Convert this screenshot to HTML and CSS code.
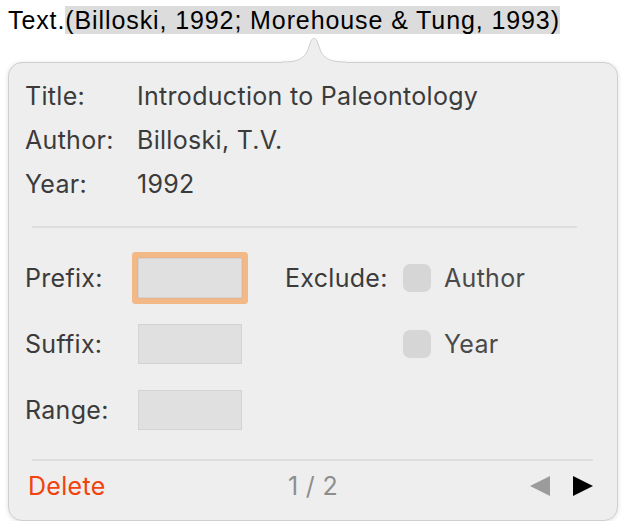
FILE: index.html
```html
<!DOCTYPE html>
<html>
<head>
    <title>Citation Popover</title>
    <link rel="stylesheet" href="styles.css">
</head>
<body>
    <div class="line">Text.<span class="cite">(Billoski, 1992; Morehouse &amp; Tung, 1993)</span></div>

    <div class="popover">
        <svg class="arrow" width="64" height="27" viewBox="0 0 64 27">
            <path d="M0 26 C14 26 20 24 25 16 L29 5 C30.5 1.5 33.5 1.5 35 5 L39 16 C44 24 50 26 64 26 L64 27 L0 27 Z" fill="#eeeeee"/>
            <path d="M0 26 C14 26 20 24 25 16 L29 5 C30.5 1.5 33.5 1.5 35 5 L39 16 C44 24 50 26 64 26" fill="none" stroke="#cfcfcf" stroke-width="1"/>
        </svg>

        <div class="meta">
            <div class="meta-row"><span class="meta-label">Title:</span><span>Introduction to Paleontology</span></div>
            <div class="meta-row"><span class="meta-label">Author:</span><span>Billoski, T.V.</span></div>
            <div class="meta-row"><span class="meta-label">Year:</span><span>1992</span></div>
        </div>

        <hr class="sep top-sep">

        <div class="form">
            <div class="form-row">
                <span class="form-label">Prefix:</span>
                <span class="field focused"></span>
                <span class="exclude-label">Exclude:</span>
                <span class="check"></span>
                <span class="check-text">Author</span>
            </div>
            <div class="form-row">
                <span class="form-label">Suffix:</span>
                <span class="field"></span>
                <span class="exclude-label"></span>
                <span class="check"></span>
                <span class="check-text">Year</span>
            </div>
            <div class="form-row">
                <span class="form-label">Range:</span>
                <span class="field"></span>
            </div>
        </div>

        <hr class="sep bottom-sep">

        <div class="footer">
            <span class="delete">Delete</span>
            <span class="pager">1 / 2</span>
            <span class="nav">
                <svg width="20" height="20" viewBox="0 0 20 20"><polygon points="20,0 20,20 0,10" fill="#9b9b9b"/></svg>
                <svg width="20" height="20" viewBox="0 0 20 20"><polygon points="0,0 0,20 20,10" fill="#000000"/></svg>
            </span>
        </div>
    </div>
</body>
</html>
```

FILE: styles.css
```css
body {
    margin: 0;
    background: #ffffff;
    font-family: "Liberation Sans", Arial, sans-serif;
}
.line {
    font-size: 25px;
    letter-spacing: 0.9px;
    color: #000;
    padding: 6px 8px 0 8px;
    line-height: 28px;
    height: 28px;
    white-space: nowrap;
}
.cite {
    background: #dcdcdc;
}
.popover {
    position: relative;
    margin: 28px 0 0 8px;
    width: 608px;
    height: 457px;
    background: #eeeeee;
    border: 1px solid #cfcfcf;
    border-radius: 14px;
    box-shadow: 0 1px 5px rgba(0, 0, 0, 0.12);
    font-family: "Inter", "Noto Sans", sans-serif;
    font-size: 25px;
    letter-spacing: 0.3px;
    color: #3b3b3b;
}
.arrow {
    position: absolute;
    top: -27px;
    left: 273px;
}
.meta {
    padding: 11px 0 0 16px;
}
.meta-row {
    display: flex;
    height: 44px;
    align-items: center;
}
.meta-label {
    width: 112px;
}
.sep {
    border: none;
    height: 2px;
    background: #dedede;
    margin: 0;
}
.top-sep {
    margin: 20px 40px 0 23px;
}
.form {
    padding: 17px 0 0 16px;
}
.form-row {
    display: flex;
    align-items: center;
    height: 66px;
}
.form-label {
    width: 113px;
}
.field {
    width: 102px;
    height: 38px;
    background: #e0e0e0;
    border: 1px solid #d4d4d4;
}
.field.focused {
    box-shadow: 0 0 0 1px #e9b48a, 0 0 0 6px #f2b886;
    border-radius: 1px;
}
.exclude-label {
    width: 118px;
    margin-left: 43px;
}
.check {
    width: 28px;
    height: 28px;
    border-radius: 7px;
    background: #d6d6d6;
}
.check-text {
    margin-left: 13px;
    color: #4a4a4a;
}
.bottom-sep {
    margin: 16px 24px 0 23px;
}
.footer {
    display: flex;
    align-items: center;
    height: 50px;
    padding: 0 24px 0 19px;
}
.delete {
    color: #f2420d;
    width: 260px;
}
.pager {
    color: #8e8e8e;
    flex: 1;
}
.nav {
    display: flex;
    gap: 23px;
}
.nav svg {
    display: block;
}
```
